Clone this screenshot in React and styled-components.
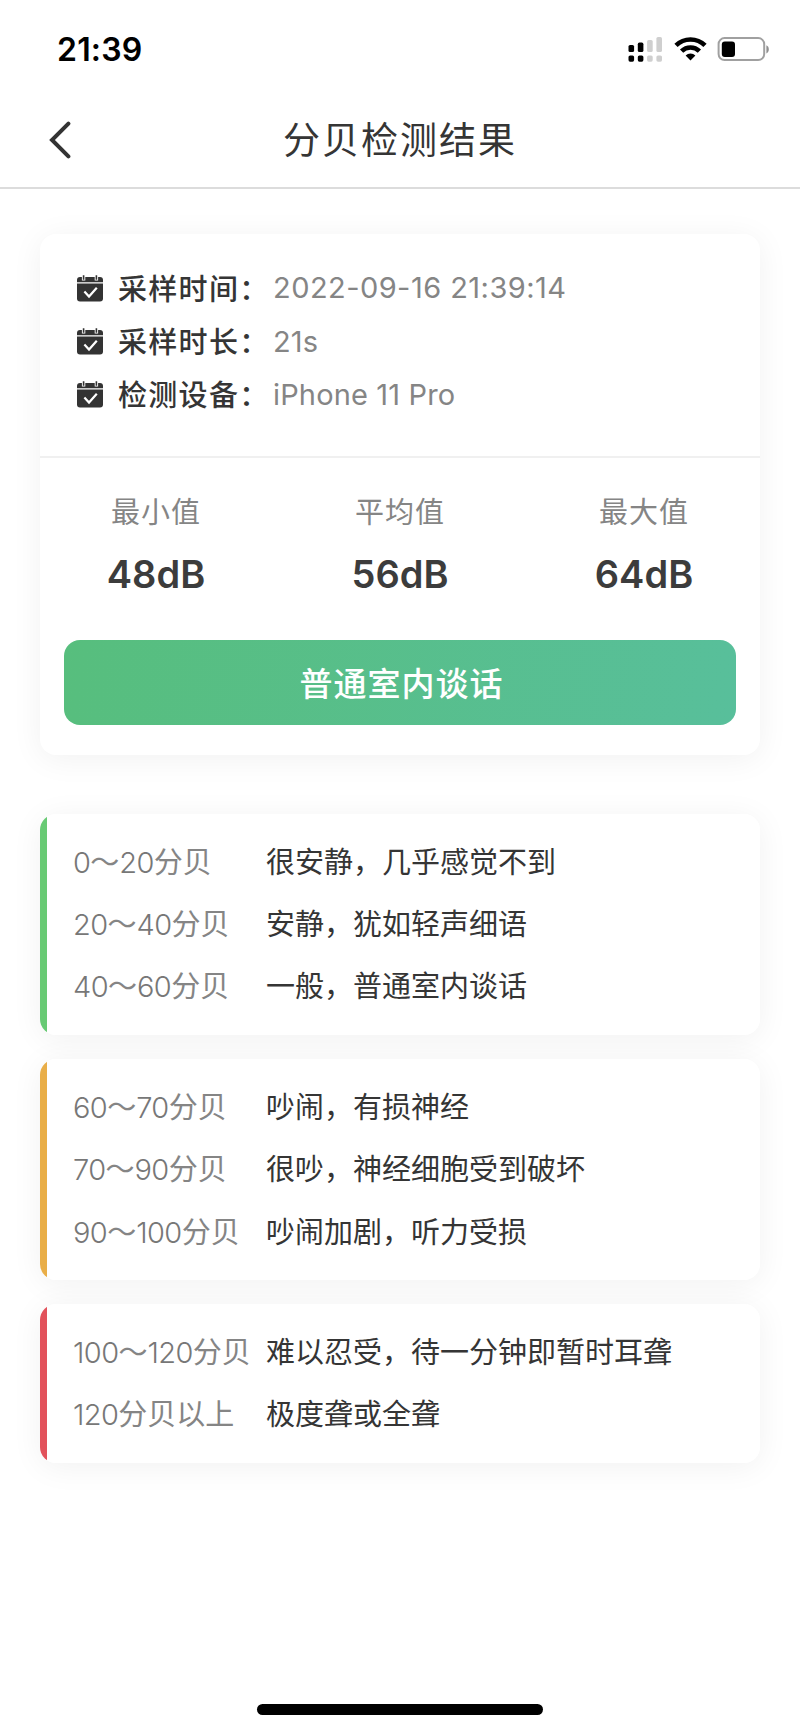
import React from "react";
import styled, { createGlobalStyle } from "styled-components";

const COLORS = {
  text: "#353535",
  muted: "#858585",
  line: "#dcdcdc",
  green: "#68ca74",
  yellow: "#e9ae48",
  red: "#e2525b",
};

const INFO = [
  { label: "采样时间：", value: "2022-09-16 21:39:14", spacing: "0.45px" },
  { label: "采样时长：", value: "21s", spacing: "0.1px" },
  { label: "检测设备：", value: "iPhone 11 Pro", spacing: "0.15px" },
];

const STATS = [
  { label: "最小值", value: "48dB" },
  { label: "平均值", value: "56dB" },
  { label: "最大值", value: "64dB" },
];

const LEVELS = [
  {
    color: COLORS.green,
    rows: [
      ["0～20分贝", "很安静，几乎感觉不到"],
      ["20～40分贝", "安静，犹如轻声细语"],
      ["40～60分贝", "一般，普通室内谈话"],
    ],
  },
  {
    color: COLORS.yellow,
    rows: [
      ["60～70分贝", "吵闹，有损神经"],
      ["70～90分贝", "很吵，神经细胞受到破坏"],
      ["90～100分贝", "吵闹加剧，听力受损"],
    ],
  },
  {
    color: COLORS.red,
    rows: [
      ["100～120分贝", "难以忍受，待一分钟即暂时耳聋"],
      ["120分贝以上", "极度聋或全聋"],
    ],
  },
];

const StatusIcons = () => (
  <svg width="144" height="28" viewBox="0 0 144 28">
    <g fill="#000">
      <rect x="0.5" y="10" width="5.6" height="7" rx="1.6" />
      <rect x="9.8" y="7.6" width="5.6" height="9.4" rx="1.6" />
      <rect x="0.5" y="20.5" width="5.6" height="6.2" rx="1.6" />
      <rect x="9.8" y="20.5" width="5.6" height="6.2" rx="1.6" />
    </g>
    <g fill="#cfcfcf">
      <rect x="19.1" y="5" width="5.6" height="12" rx="1.6" />
      <rect x="28.4" y="2" width="5.6" height="15" rx="1.6" />
      <rect x="19.1" y="20.5" width="5.6" height="6.2" rx="1.6" />
      <rect x="28.4" y="20.5" width="5.6" height="6.2" rx="1.6" />
    </g>
    <g fill="none" stroke="#000" strokeWidth="4.6">
      <path d="M48 10.4a20.6 20.6 0 0 1 29 0" />
      <path d="M53.6 16.2a12.6 12.6 0 0 1 17.8 0" />
    </g>
    <path d="M57.6 20.6a7 7 0 0 1 9.8 0l-4.9 4.9z" fill="#000" />
    <rect x="90.6" y="3.1" width="45.6" height="22" rx="6" fill="none" stroke="#a0a0a0" strokeWidth="2" />
    <rect x="93.8" y="6.4" width="13.2" height="15.6" rx="3" fill="#000" />
    <path d="M138.4 10.2c3.2 1.2 3.2 7 0 8.2z" fill="#8f8f8f" />
  </svg>
);

const CalendarIcon = () => (
  <svg width="28" height="28" viewBox="0 0 28 28">
    <path d="M1 8.2V6a3 3 0 0 1 3-3h20a3 3 0 0 1 3 3v2.2z" fill="#333" />
    <path d="M1 9.4h26v15a3 3 0 0 1-3 3H4a3 3 0 0 1-3-3z" fill="#333" />
    <path d="M7.6 1v5.4M20.4 1v5.4" stroke="#fff" strokeWidth="3.4" />
    <path d="M7.6 1.2v4.6M20.4 1.2v4.6" stroke="#333" strokeWidth="1.6" />
    <path d="M8.4 17.6l4.6 5 7.8-8.8" fill="none" stroke="#fff" strokeWidth="2.2" />
  </svg>
);

// digits are set tighter and lighter than the chinese part of the range
const RangeText = ({ text }) => (
  <Range>
    {text
      .split(/(\d+)/)
      .filter(Boolean)
      .map((part, i) => (/\d/.test(part) ? <Digits key={i}>{part}</Digits> : part))}
  </Range>
);

const App = () => {
  return (
    <Screen>
      <GlobalStyle />
      <StatusBar>
        <Time>21:39</Time>
        <StatusIcons />
      </StatusBar>
      <Header>
        <Back aria-label="back">
          <svg width="22" height="38" viewBox="0 0 22 38">
            <path
              d="M19.4 2.6L3 19l16.4 16.4"
              fill="none"
              stroke="#333"
              strokeWidth="4"
              strokeLinecap="round"
            />
          </svg>
        </Back>
        <Title>分贝检测结果</Title>
      </Header>

      <Content>
        <ResultCard>
          <InfoList>
            {INFO.map((item) => (
              <InfoRow key={item.label}>
                <CalendarIcon />
                <InfoLabel>{item.label}</InfoLabel>
                <InfoValue $spacing={item.spacing}>{item.value}</InfoValue>
              </InfoRow>
            ))}
          </InfoList>
          <Stats>
            {STATS.map((stat) => (
              <Stat key={stat.label}>
                <StatLabel>{stat.label}</StatLabel>
                <StatValue>{stat.value}</StatValue>
              </Stat>
            ))}
          </Stats>
          <ResultButton>普通室内谈话</ResultButton>
        </ResultCard>

        {LEVELS.map((level) => (
          <LevelCard key={level.color} $color={level.color}>
            {level.rows.map(([range, text]) => (
              <LevelRow key={range}>
                <RangeText text={range} />
                <span>{text}</span>
              </LevelRow>
            ))}
          </LevelCard>
        ))}
      </Content>
      <HomeIndicator />
    </Screen>
  );
};

const GlobalStyle = createGlobalStyle`
  * {
    box-sizing: border-box;
  }
  body {
    margin: 0;
    background: #fff;
    color: ${COLORS.text};
    font-family: Inter, "Noto Sans CJK SC", sans-serif;
  }
`;

const Screen = styled.div`
  display: flex;
  flex-direction: column;
  width: 800px;
  height: 1732px;
  overflow: hidden;
  background: #fff;
`;

const StatusBar = styled.div`
  display: flex;
  justify-content: space-between;
  align-items: center;
  height: 98px;
  padding: 0 28px 0 57px;
`;

const Time = styled.span`
  color: #000;
  font-size: 32px;
  font-weight: 600;
  letter-spacing: 0.2px;
`;

const Header = styled.header`
  display: grid;
  grid-template-columns: 100px 1fr 100px;
  align-items: center;
  height: 91px;
  padding-bottom: 4px;
  border-bottom: 2px solid ${COLORS.line};
`;

const Back = styled.button`
  display: flex;
  padding: 0 0 2px 49px;
  border: none;
  background: none;
`;

const Title = styled.h1`
  margin: 0;
  font-size: 37px;
  font-weight: 400;
  line-height: 54px;
  letter-spacing: 2px;
  text-align: center;
`;

const Content = styled.main`
  display: flex;
  flex-direction: column;
  flex: 1;
  gap: 24.5px;
  padding: 45px 40px 0;
`;

const Card = styled.section`
  background: #fff;
  border-radius: 16px;
  box-shadow: 0 4px 32px rgba(0, 0, 0, 0.06);
`;

const ResultCard = styled(Card)`
  height: 521px;
  margin-bottom: 34.5px;
`;

const InfoList = styled.div`
  height: 224px;
  padding: 27px 36px 0;
  border-bottom: 2px solid #f0f0f0;
`;

const InfoRow = styled.div`
  display: flex;
  align-items: center;
  height: 53.4px;
`;

const InfoLabel = styled.span`
  width: 155px;
  margin-left: 14px;
  padding-bottom: 2px;
  font-size: 29px;
  font-weight: 500;
  letter-spacing: 1.3px;
  white-space: nowrap;
`;

const InfoValue = styled.span`
  color: ${COLORS.muted};
  font-size: 29px;
  letter-spacing: ${(props) => props.$spacing};
`;

const Stats = styled.div`
  display: flex;
  justify-content: space-between;
  height: 182px;
  padding: 32px 60px 0;
`;

const Stat = styled.div`
  display: flex;
  flex-direction: column;
  align-items: center;
  width: 112px;
`;

const StatLabel = styled.span`
  color: ${COLORS.muted};
  font-size: 29px;
  line-height: 46px;
  letter-spacing: 1px;
`;

const StatValue = styled.strong`
  margin-top: 14px;
  color: #3c3c3c;
  font-size: 38px;
  font-weight: 600;
  line-height: 48px;
`;

const ResultButton = styled.button`
  display: block;
  width: 672px;
  height: 85px;
  margin: 0 auto;
  padding: 0 0 2px 3px;
  border: none;
  border-radius: 16px;
  background: linear-gradient(100deg, #57be7d, #58bf9b);
  color: #fff;
  font-family: inherit;
  font-size: 33px;
  font-weight: 500;
  letter-spacing: 1px;
`;

const LevelCard = styled(Card)`
  padding: 15px 0 19px 33px;
  background: linear-gradient(to right, ${(props) => props.$color} 7px, #fff 7px);
`;

const LevelRow = styled.div`
  display: flex;
  align-items: center;
  height: 62.2px;
  font-size: 29px;
  white-space: nowrap;
`;

const Range = styled.span`
  width: 193px;
  color: ${COLORS.muted};
`;

const Digits = styled.span`
  font-weight: 300;
  color: #777;
  letter-spacing: -0.6px;
`;

const HomeIndicator = styled.div`
  width: 286px;
  height: 11px;
  margin: 0 auto 17px;
  border-radius: 6px;
  background: #000;
`;

export default App;
